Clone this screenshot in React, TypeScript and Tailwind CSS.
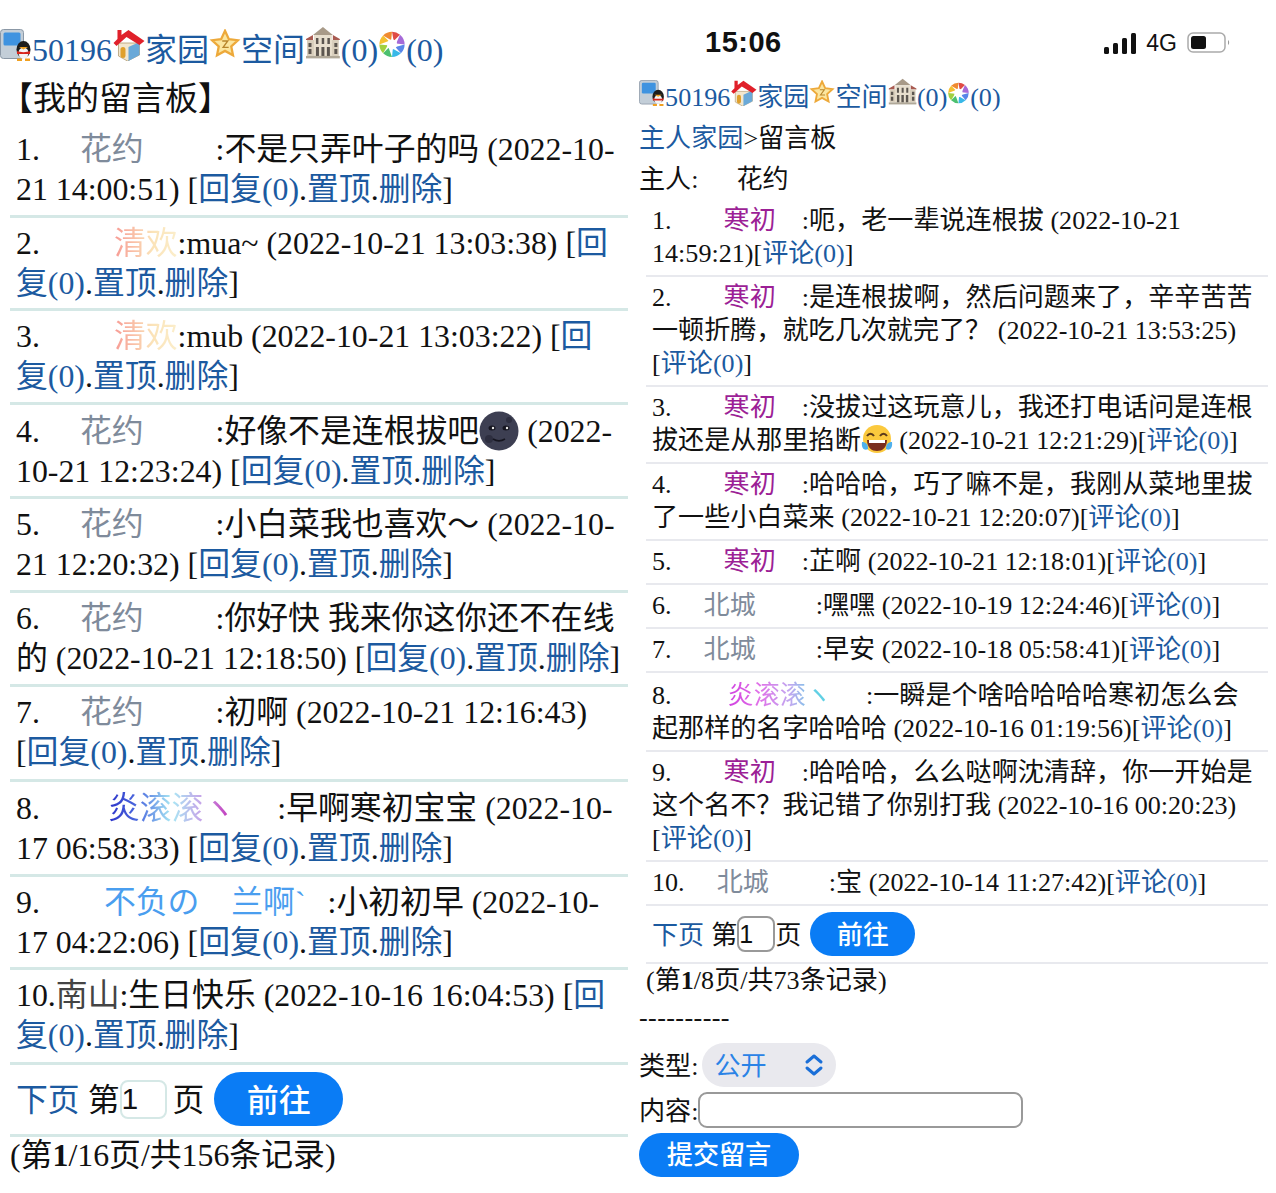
import React from 'react';

const FONT = '[font-family:"Liberation_Serif","Noto_Sans_CJK_SC",serif]';

const PhoneQQ = () => (
  <svg viewBox="0 0 32 32" className="inline-block h-[1em] w-[1em] align-baseline">
    <rect x="0.500" y="0.500" width="23" height="29" rx="3" fill="#c3ced8" stroke="#8b98a6" />
    <rect x="3.500" y="3.500" width="17" height="13" rx="1.500" fill="#3f93e0" />
    <ellipse cx="23.500" cy="20.500" rx="7" ry="8.500" fill="#1d1d1d" />
    <ellipse cx="23.500" cy="24" rx="5" ry="5.500" fill="#f4f4f4" />
    <path d="M17 22c3 1.500 10 1.500 13 0v3H17z" fill="#d8261c" />
    <path d="M19 18h9l-4.500 2.500z" fill="#f0a020" />
    <path d="M17 32h5v-2.500h-5zM25 32h5v-2.500h-5z" fill="#f0a020" />
  </svg>
);

const House = () => (
  <svg viewBox="0 0 32 32" className="inline-block h-[1em] w-[1.03em] align-baseline">
    <path d="M6 14h21v12L15 32 6 27z" fill="#f2e7cf" stroke="#a98f60" strokeWidth="0.700" />
    <path d="M16 18l11-5v13l-11 6z" fill="#6aa9d8" />
    <rect x="8" y="18" width="5" height="11" rx="2.500" fill="#dfa02c" />
    <path d="M5 1h4v5l7-5 16 11-5 4L14 8 4 17 1 14l4-4z" fill="#e0202a" />
  </svg>
);

const Star = () => (
  <svg viewBox="0 0 32 32" className="inline-block h-[0.92em] w-[1em] align-[0.09em]">
    <path d="M16 2l4.200 9 9.800 1.200-7.200 6.700 1.900 9.700L16 23.800l-8.700 4.800 1.900-9.700L2 12.200l9.800-1.200z" fill="#fbe6a0" stroke="#eda93a" strokeWidth="2.500" />
    <path d="M13 13h6l-5 7h6" fill="none" stroke="#b8862d" strokeWidth="1.500" />
  </svg>
);

const Museum = () => (
  <svg viewBox="0 0 36 33" className="inline-block h-[1.03em] w-[1.12em] align-[0.06em]">
    <path d="M18 1l10 8H8z" fill="#a89a88" />
    <path d="M1 13l7-4v5H1zM35 13l-7-4v5h7z" fill="#a85a50" />
    <rect x="2" y="14" width="32" height="16" fill="#d9cfbd" />
    <rect x="9" y="9" width="18" height="21" fill="#e8dfce" />
    <path d="M11 12h2.500v6H11zM16.800 12h2.500v6h-2.500zM22.500 12H25v6h-2.500zM11 21h3v9h-3zM16.500 21h3v9h-3zM22 21h3v9h-3zM3.500 17h3v4h-3zM29.500 17h3v4h-3zM3.500 23h3v5h-3zM29.500 23h3v5h-3z" fill="#5c5650" />
    <rect x="1" y="30" width="34" height="2.500" fill="#b0a898" />
  </svg>
);

const Aperture = () => (
  <svg viewBox="0 0 32 32" className="inline-block h-[0.84em] w-[0.875em] align-[0.09em]">
    <path d="M16 1a15 15 0 0 1 9.500 3.400L18 12z" fill="#e04b45" />
    <path d="M25.500 4.400A15 15 0 0 1 31 16l-10-1z" fill="#a66ad8" />
    <path d="M31 16a15 15 0 0 1-4.400 10.600L20 19z" fill="#5a86e8" />
    <path d="M26.600 26.600A15 15 0 0 1 16 31l1-10z" fill="#38b8e8" />
    <path d="M16 31A15 15 0 0 1 5.400 26.600L12 20z" fill="#4cc070" />
    <path d="M5.400 26.600A15 15 0 0 1 1 16l10 1z" fill="#a0d040" />
    <path d="M1 16A15 15 0 0 1 5.400 5.400L12 12z" fill="#f4c030" />
    <path d="M5.400 5.400A15 15 0 0 1 16 1l-1 10z" fill="#f08a30" />
    <circle cx="16" cy="16" r="6" fill="#fff" />
  </svg>
);

const Moon = () => (
  <svg width="40" height="40" viewBox="0 0 40 40" className="inline-block align-[-9px]">
    <circle cx="20" cy="20" r="19.500" fill="#3d3f52" />
    <circle cx="10" cy="28" r="4" fill="#2d2e3f" />
    <circle cx="30" cy="9" r="3" fill="#2d2e3f" />
    <ellipse cx="13" cy="17" rx="3.500" ry="2.500" fill="#15151f" />
    <ellipse cx="27" cy="17" rx="3.500" ry="2.500" fill="#15151f" />
    <circle cx="14" cy="17" r="1.200" fill="#e8e8e8" />
    <circle cx="28" cy="17" r="1.200" fill="#e8e8e8" />
    <path d="M14 28c4 2.500 8 2.500 12 0" fill="none" stroke="#15151f" strokeWidth="1.500" />
  </svg>
);

const Joy = () => (
  <svg width="32" height="32" viewBox="0 0 32 32" className="inline-block align-[-7px]">
    <circle cx="16" cy="15" r="14" fill="#fbc93d" />
    <path d="M6 12c2-3 5-3 7 0M19 12c2-3 5-3 7 0" fill="none" stroke="#5b3a1a" strokeWidth="2" />
    <path d="M6 16h20c0 8-5 11-10 11S6 24 6 16z" fill="#7a2e1d" />
    <path d="M8 16h16v3H8z" fill="#fff" />
    <path d="M1 18c4 0 6 2 6 7-3 2-7 0-6-7zM31 18c-4 0-6 2-6 7 3 2 7 0 6-7z" fill="#4fb0ec" />
  </svg>
);

const Nav = () => (
  <>
    <PhoneQQ />
    <a>50196</a>
    <House />
    <a>家园</a>
    <Star />
    <a>空间</a>
    <Museum />
    <a>(0)</a>
    <Aperture />
    <a>(0)</a>
  </>
);

type Row = { n: string; name: string; nameCls: string; text: React.ReactNode; time: string; pad?: string };

const HUA = 'ml-[40px] mr-[72px] text-[#7f8b9b]';
const QING = 'ml-[74px] bg-[linear-gradient(90deg,#f79a94,#fbe3b8_60%,#fbeecb)] bg-clip-text text-transparent';

const leftRows: Row[] = [
  { n: '1.', name: '花约', nameCls: HUA, text: '不是只弄叶子的吗', time: '(2022-10-21 14:00:51)' },
  { n: '2.', name: '清欢', nameCls: QING, text: 'mua~', time: '(2022-10-21 13:03:38)' },
  { n: '3.', name: '清欢', nameCls: QING, text: 'mub', time: '(2022-10-21 13:03:22)' },
  { n: '4.', name: '花约', nameCls: HUA, text: <>好像不是连根拔吧<Moon /></>, time: '(2022-10-21 12:23:24)' },
  { n: '5.', name: '花约', nameCls: HUA, text: '小白菜我也喜欢～', time: '(2022-10-21 12:20:32)' },
  { n: '6.', name: '花约', nameCls: HUA, text: '你好快 我来你这你还不在线的', time: '(2022-10-21 12:18:50)' },
  { n: '7.', name: '花约', nameCls: HUA, text: '初啊', time: '(2022-10-21 12:16:43)', pad: 'pt-[6px] pb-[6.600px]' },
  {
    n: '8.',
    name: '炎滚滚ヽ',
    nameCls: 'ml-[68px] mr-[42px] bg-[linear-gradient(90deg,#2a30c8,#4f6fe0_25%,#a8e8f4_50%,#c8a0e8_75%,#c020b0)] bg-clip-text text-transparent',
    text: '早啊寒初宝宝',
    time: '(2022-10-17 06:58:33)',
    pad: 'pt-[7px] pb-[4.600px]',
  },
  {
    n: '9.',
    name: '不负の　兰啊ˋ',
    nameCls: 'ml-[64px] mr-[22px] text-[#4a9eef]',
    text: '小初初早',
    time: '(2022-10-17 04:22:06)',
  },
  { n: '10.', name: '南山', nameCls: 'text-[#444]', text: '生日快乐', time: '(2022-10-16 16:04:53)', pad: 'pt-[6px] pb-[5.600px]' },
];

const HAN = 'ml-[52px] mr-[26px] text-[#9c1f96]';
const BEI = 'ml-[32px] mr-[60px] text-[#7f8b9b]';

const rightRows: Row[] = [
  { n: '1.', name: '寒初', nameCls: HAN, text: '呃，老一辈说连根拔', time: '(2022-10-21 14:59:21)' },
  { n: '2.', name: '寒初', nameCls: HAN, text: '是连根拔啊，然后问题来了，辛辛苦苦一顿折腾，就吃几次就完了？', time: ' (2022-10-21 13:53:25)' },
  { n: '3.', name: '寒初', nameCls: HAN, text: <>没拔过这玩意儿，我还打电话问是连根拔还是从那里掐断<Joy /></>, time: '(2022-10-21 12:21:29)' },
  { n: '4.', name: '寒初', nameCls: HAN, text: '哈哈哈，巧了嘛不是，我刚从菜地里拔了一些小白菜来', time: '(2022-10-21 12:20:07)' },
  { n: '5.', name: '寒初', nameCls: HAN, text: '芷啊', time: '(2022-10-21 12:18:01)' },
  { n: '6.', name: '北城', nameCls: BEI, text: '嘿嘿', time: '(2022-10-19 12:24:46)' },
  { n: '7.', name: '北城', nameCls: BEI, text: '早安', time: '(2022-10-18 05:58:41)' },
  {
    n: '8.',
    name: '炎滚滚ヽ',
    nameCls: 'ml-[56px] mr-[34px] bg-[linear-gradient(90deg,#d040e0,#e070e8_30%,#c0a8f0_60%,#60d0e4_85%,#60d0e4)] bg-clip-text text-transparent',
    text: '一瞬是个啥哈哈哈哈寒初怎么会起那样的名字哈哈哈',
    time: '(2022-10-16 01:19:56)',
    pad: 'pt-[6px] pb-[5px]',
  },
  { n: '9.', name: '寒初', nameCls: HAN, text: '哈哈哈，么么哒啊沈清辞，你一开始是这个名不？我记错了你别打我', time: '(2022-10-16 00:20:23)' },
  { n: '10.', name: '北城', nameCls: BEI, text: '宝', time: '(2022-10-14 11:27:42)' },
];

const LeftRow = ({ r }: { r: Row }) => (
  <div className={`border-b-[3px] border-[#d5e8e6] px-[6px] leading-[40px] ${r.pad ?? 'pt-[6px] pb-[4.600px]'}`}>
    {r.n}
    <span className={r.nameCls}>{r.name}</span>:{r.text} {r.time} [<a>回复(0)</a>.<a>置顶</a>.<a>删除</a>]
  </div>
);

const RightRow = ({ r }: { r: Row }) => (
  <div className={`border-b-[2px] border-[#e8e9ee] pl-[6px] pr-[10px] leading-[33px] ${r.pad ?? 'pt-[4px] pb-[5px]'}`}>
    {r.n}
    <span className={r.nameCls}>{r.name}</span>:{r.text} {r.time}[<a>评论(0)</a>]
  </div>
);

const App = () => (
  <div className={`flex h-[1193px] w-[1276px] overflow-hidden bg-white text-[#111] ${FONT} [&_a]:text-[#1c5aa0]`}>
    <div className="flex w-[636px] shrink-0 flex-col pt-[24px] pl-[4px] pr-[8px] text-[31.850px]">
      <div className="h-[44px] shrink-0 -ml-[4px] text-[32px] leading-[53px] whitespace-nowrap">
        <Nav />
      </div>
      <div className="h-[56px] shrink-0 leading-[62px] -ml-[4px] text-[33px]">【我的留言板】</div>
      <div className="ml-[6px]">
        {leftRows.map((r) => (
          <LeftRow key={r.n} r={r} />
        ))}
        <div className="flex h-[72px] items-center border-b-[3px] border-[#d5e8e6] pl-[6px]">
          <a className="mt-[3px] mr-[8px]">下页</a>
          <span className="mt-[3px]">第</span>
          <span className="flex h-[39px] w-[47px] items-center rounded-[8px] border-2 border-[#d5e8e6] font-['Liberation_Sans'] text-[30px] leading-none">1</span>
          <span className="mt-[3px] ml-[6px]">页</span>
          <span className="ml-[10px] flex h-[54px] w-[129px] items-center justify-center rounded-full bg-[#0a7cf5] pt-[4px] text-[32px] font-medium text-[#fff]">前往</span>
        </div>
      </div>
      <div className="leading-[38px] ml-[6px]">
        (第<b>1</b>/16页/共156条记录)
      </div>
    </div>

    <div className="flex w-[640px] shrink-0 flex-col text-[26.100px]">
      <div className="flex h-[70px] shrink-0 items-center pt-[16px] font-['Liberation_Sans'] text-[#111]">
        <span className="ml-[69px] text-[29px] font-bold tracking-[0.500px]">15:06</span>
        <span className="ml-auto flex items-center gap-[10px]">
          <svg width="32" height="22" viewBox="0 0 32 22">
            <rect x="0" y="15" width="5" height="7" rx="1.500" fill="#111" />
            <rect x="9" y="11" width="5" height="11" rx="1.500" fill="#111" />
            <rect x="18" y="6" width="5" height="16" rx="1.500" fill="#111" />
            <rect x="27" y="1" width="5" height="21" rx="1.500" fill="#111" />
          </svg>
          <span className="text-[23px] leading-none">4G</span>
          <svg width="44" height="22" viewBox="0 0 44 22" className="mr-[45px]">
            <rect x="1" y="1" width="37" height="19" rx="5" fill="none" stroke="#aaa" strokeWidth="1.500" />
            <rect x="4" y="4" width="15" height="13" rx="2.500" fill="#111" />
            <path d="M41 8c1.500 1 1.500 4 0 5z" fill="#999" />
          </svg>
        </span>
      </div>
      <div className="flex-1 pl-[3px] pr-[8px] pt-[8px]">
        <div className="h-[41px] leading-[40px] whitespace-nowrap">
          <Nav />
        </div>
        <div className="h-[41px] leading-[40px]">
          <a>主人家园</a>&gt;留言板
        </div>
        <div className="h-[40px] leading-[40px]">
          主人:<span className="ml-[38px]">花约</span>
        </div>
        <div className="ml-[7px]">
          {rightRows.map((r) => (
            <RightRow key={r.n} r={r} />
          ))}
          <div className="flex h-[58px] items-center border-b-[2px] border-[#e8e9ee] pl-[6px]">
            <a className="mt-[3px] mr-[7px]">下页</a>
            <span className="mt-[3px]">第</span>
            <span className="flex h-[36px] w-[38px] items-center rounded-[8px] border-2 border-[#999] font-['Liberation_Sans'] text-[25px] leading-none">1</span>
            <span className="mt-[3px]">页</span>
            <span className="ml-[9px] flex h-[44px] w-[105px] items-center justify-center rounded-full bg-[#0a7cf5] pt-[3px] font-medium text-[#fff]">前往</span>
          </div>
        </div>
        <div className="ml-[7px] leading-[33px]">
          (第<b>1</b>/8页/共73条记录)
        </div>
        <div className="mt-[1px] leading-[40px] tracking-[0.400px]">----------</div>
        <div className="mt-[5px] flex h-[44px] items-center">
          <span className="mt-[3px]">类型:</span>
          <span className="ml-[4px] flex h-[44px] w-[134px] items-center justify-between rounded-full bg-[#e9e9ee] pr-[12px] pl-[12px] text-[#2b83e6]">
            <span className="mt-[3px]">公开</span>
            <svg width="20" height="24" viewBox="0 0 20 24" fill="none" stroke="#1a6fd8" strokeWidth="3" strokeLinecap="round" strokeLinejoin="round">
              <path d="M3 9l7-6 7 6M3 15l7 6 7-6" />
            </svg>
          </span>
        </div>
        <div className="mt-[5px] flex h-[36px] items-center">
          <span className="mt-[3px]">内容:</span>
          <span className="h-[36px] w-[325px] rounded-[9px] border-2 border-[#999]" />
        </div>
        <span className="mt-[5px] flex h-[44px] w-[160px] items-center justify-center rounded-full bg-[#0a7cf5] pt-[2px] font-medium text-[#fff]">提交留言</span>
      </div>
    </div>
  </div>
);

export default App;
